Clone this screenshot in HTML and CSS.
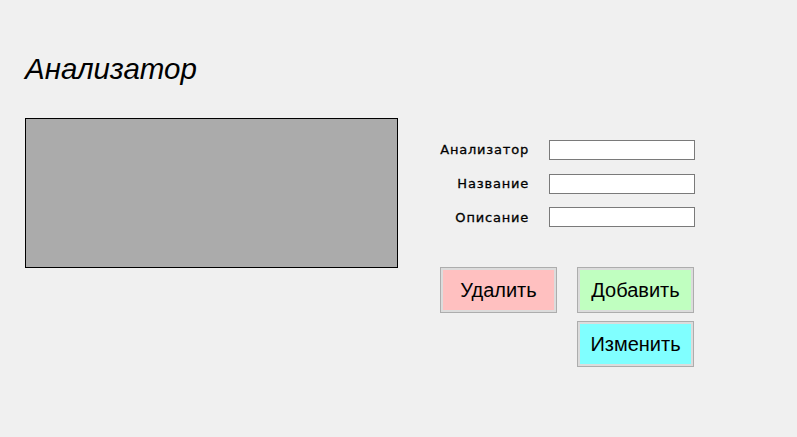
FILE: index.html
```html
<!DOCTYPE html>
<html lang="ru">
<head>
<meta charset="utf-8">
<title>Анализатор</title>
<link rel="stylesheet" href="styles.css">
</head>
<body>
<div class="window">
  <h1 class="title">Анализатор</h1>
  <div class="main">
    <div class="preview"></div>
    <div class="side">
      <div class="form">
        <label class="lbl" for="f1">Анализатор</label>
        <input class="field" id="f1" type="text">
        <label class="lbl" for="f2">Название</label>
        <input class="field" id="f2" type="text">
        <label class="lbl" for="f3">Описание</label>
        <input class="field" id="f3" type="text">
      </div>
      <div class="buttons">
        <button class="btn btn-del">Удалить</button>
        <button class="btn btn-add">Добавить</button>
        <button class="btn btn-edit">Изменить</button>
      </div>
    </div>
  </div>
</div>
</body>
</html>
```

FILE: styles.css
```css
html, body {
  margin: 0;
  padding: 0;
  background: #f0f0f0;
  width: 797px;
  height: 437px;
  overflow: hidden;
}

.window {
  padding: 51px 0 0 25px;
  font-family: "Liberation Sans", Arial, sans-serif;
  color: #000;
}

.title {
  margin: 0;
  font-size: 29.5px;
  font-weight: normal;
  font-style: italic;
  line-height: 36px;
  height: 36px;
}

.main {
  display: flex;
  align-items: flex-start;
  margin-top: 31px;
}

.preview {
  width: 371px;
  height: 148px;
  background: #ababab;
  border: 1px solid #000;
}

.side {
  margin-left: 42px;
  padding-top: 22px;
}

.form {
  display: grid;
  grid-template-columns: 88px 146px;
  column-gap: 21px;
  row-gap: 14px;
  align-items: center;
}

.form .field:nth-of-type(3) {
  margin-top: -1px;
}

.lbl {
  text-align: right;
  font-family: "DejaVu Sans", Verdana, sans-serif;
  font-size: 13px;
  font-weight: normal;
  letter-spacing: 0.8px;
  margin-right: -1px;
  margin-top: -1px;
  white-space: nowrap;
  -webkit-text-stroke: 0.3px #000;
}

.field {
  box-sizing: border-box;
  width: 146px;
  height: 20px;
  margin: 0;
  padding: 0 3px;
  border: 1px solid #7a7a7a;
  background: #fff;
  font: 12px "Liberation Sans", Arial, sans-serif;
  outline: none;
}

.buttons {
  display: grid;
  grid-template-columns: 117px 117px;
  column-gap: 20px;
  row-gap: 8px;
  margin-top: 40px;
}

.btn {
  box-sizing: border-box;
  height: 46px;
  margin: 0;
  padding: 0;
  border: 1px solid #adadad;
  box-shadow: inset 0 0 0 2px #dcdcdc;
  font-family: "Liberation Sans", Arial, sans-serif;
  font-size: 20px;
  color: #000;
  cursor: pointer;
}

.btn-del { background: #ffc0c0; }
.btn-add { background: #c0ffc0; }
.btn-edit { background: #80ffff; grid-column: 2; }
```
